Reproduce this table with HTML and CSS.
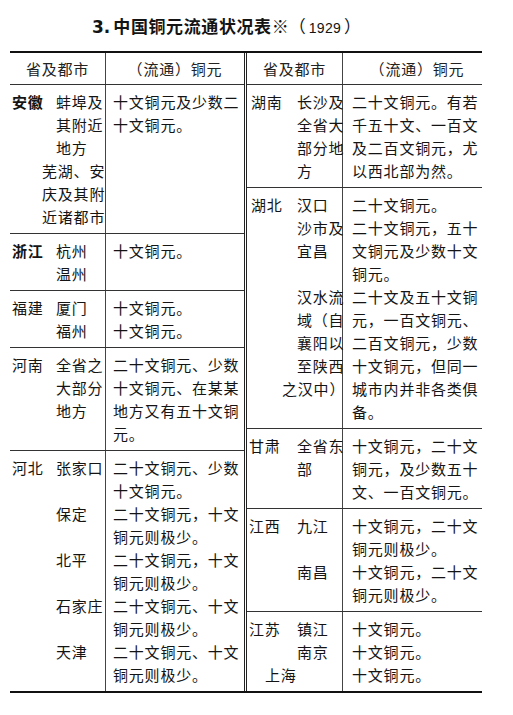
FILE: index.html
```html
<!DOCTYPE html>
<html lang="zh">
<head>
<meta charset="utf-8">
<title>中国铜元流通状况表</title>
<link rel="stylesheet" href="styles.css">
</head>
<body>
<div class="page">
  <h1 class="title"><span class="num">3.</span>中国铜元流通状况表<span class="light">※（<span class="yr">1929</span>）</span></h1>
  <div class="table">
    <div class="half left">
      <div class="head">
        <div class="c1">省及都市</div>
        <div class="c2">（流通）铜元</div>
      </div>
      <div class="row">
        <div class="c1"><div class="prov strong">安徽</div><div class="cities">
          <div class="ln">蚌埠及</div><div class="ln">其附近</div><div class="ln">地方</div>
          <div class="ln hang">芜湖、安</div><div class="ln hang">庆及其附</div><div class="ln hang">近诸都市</div>
        </div></div>
        <div class="c2">十文铜元及少数二<br>十文铜元。</div>
      </div>
      <div class="row">
        <div class="c1"><div class="prov strong">浙江</div><div class="cities">
          <div class="ln">杭州</div><div class="ln">温州</div>
        </div></div>
        <div class="c2">十文铜元。</div>
      </div>
      <div class="row">
        <div class="c1"><div class="prov">福建</div><div class="cities">
          <div class="ln">厦门</div><div class="ln">福州</div>
        </div></div>
        <div class="c2">十文铜元。<br>十文铜元。</div>
      </div>
      <div class="row">
        <div class="c1"><div class="prov">河南</div><div class="cities">
          <div class="ln">全省之</div><div class="ln">大部分</div><div class="ln">地方</div>
        </div></div>
        <div class="c2">二十文铜元、少数<br>十文铜元、在某某<br>地方又有五十文铜<br>元。</div>
      </div>
      <div class="row">
        <div class="c1"><div class="prov">河北</div><div class="cities">
          <div class="ln">张家口</div><div class="ln"></div>
          <div class="ln">保定</div><div class="ln"></div>
          <div class="ln">北平</div><div class="ln"></div>
          <div class="ln">石家庄</div><div class="ln"></div>
          <div class="ln">天津</div><div class="ln"></div>
        </div></div>
        <div class="c2">二十文铜元、少数<br>十文铜元。<br>二十文铜元，十文<br>铜元则极少。<br>二十文铜元，十文<br>铜元则极少。<br>二十文铜元、十文<br>铜元则极少。<br>二十文铜元、十文<br>铜元则极少。</div>
      </div>
    </div>
    <div class="half right">
      <div class="head">
        <div class="c1">省及都市</div>
        <div class="c2">（流通）铜元</div>
      </div>
      <div class="row">
        <div class="c1"><div class="prov">湖南</div><div class="cities">
          <div class="ln">长沙及</div><div class="ln">全省大</div><div class="ln">部分地</div><div class="ln">方</div>
        </div></div>
        <div class="c2">二十文铜元。有若<br>千五十文、一百文<br>及二百文铜元，尤<br>以西北部为然。</div>
      </div>
      <div class="row">
        <div class="c1"><div class="prov">湖北</div><div class="cities">
          <div class="ln">汉口</div><div class="ln">沙市及</div><div class="ln">宜昌</div><div class="ln"></div>
          <div class="ln">汉水流</div><div class="ln">域（自</div><div class="ln">襄阳以</div><div class="ln">至陕西</div>
          <div class="ln hang-r">之汉中）</div><div class="ln"></div>
        </div></div>
        <div class="c2">二十文铜元。<br>二十文铜元，五十<br>文铜元及少数十文<br>铜元。<br>二十文及五十文铜<br>元，一百文铜元、<br>二百文铜元，少数<br>十文铜元，但同一<br>城市内并非各类俱<br>备。</div>
      </div>
      <div class="row">
        <div class="c1"><div class="prov near">甘肃</div><div class="cities">
          <div class="ln">全省东</div><div class="ln">部</div>
        </div></div>
        <div class="c2">十文铜元，二十文<br>铜元，及少数五十<br>文、一百文铜元。</div>
      </div>
      <div class="row">
        <div class="c1"><div class="prov near">江西</div><div class="cities">
          <div class="ln">九江</div><div class="ln"></div><div class="ln">南昌</div><div class="ln"></div>
        </div></div>
        <div class="c2">十文铜元，二十文<br>铜元则极少。<br>十文铜元，二十文<br>铜元则极少。</div>
      </div>
      <div class="row">
        <div class="c1"><div class="prov near">江苏</div><div class="cities">
          <div class="ln">镇江</div><div class="ln">南京</div><div class="ln hang-far">上海</div>
        </div></div>
        <div class="c2">十文铜元。<br>十文铜元。<br>十文铜元。</div>
      </div>
    </div>
  </div>
</div>
</body>
</html>
```

FILE: styles.css
```css
html, body {
  margin: 0;
  background: #ffffff;
}

body {
  color: #141414;
  font-family: "Noto Sans CJK SC", "Noto Sans", sans-serif;
}

.page {
  width: 472px;
  padding: 14px 0 0 10px;
}

.title {
  margin: 0 0 13px 82px;
  height: 24px;
  font-size: 17px;
  font-weight: 700;
  line-height: 24px;
  letter-spacing: 0.6px;
  white-space: nowrap;
}

.title .num {
  font-family: "DejaVu Sans", sans-serif;
  letter-spacing: 0;
  margin-right: 3px;
  line-height: 1;
}

.title .light {
  font-weight: 400;
  letter-spacing: 0;
}

.title .yr {
  font-family: "Liberation Sans", sans-serif;
  font-size: 14px;
  line-height: 1;
  letter-spacing: 0.3px;
  padding: 0 3px;
}

.table {
  display: flex;
  border-top: 2px solid #111;
  border-bottom: 2px solid #111;
  height: 642px;
  box-sizing: border-box;
}

.half {
  display: flex;
  flex-direction: column;
}

.left {
  width: 237px;
  box-sizing: border-box;
  border-right: 3px double #222;
}

.right {
  flex: 1;
}

.head {
  display: flex;
  height: 35px;
  box-sizing: border-box;
  border-bottom: 1px solid #333;
  font-size: 15px;
  letter-spacing: 0.8px;
  color: #222;
}

.head .c1,
.head .c2 {
  display: flex;
  align-items: center;
  justify-content: center;
  padding: 0;
}

.row {
  display: flex;
  border-bottom: 1px solid #333;
  font-size: 15px;
  line-height: 23px;
  letter-spacing: 0.8px;
  white-space: nowrap;
}

.row:last-child {
  flex: 1;
  border-bottom: 0;
}

.c1 {
  flex: none;
  width: 96px;
  box-sizing: border-box;
  border-right: 1px solid #444;
  display: flex;
  padding: 5px 0;
}

.c2 {
  flex: 1;
  padding: 5px 0 5px 7px;
}

.right .c2 {
  padding-left: 9px;
}

.prov {
  flex: none;
  width: 46px;
  box-sizing: border-box;
  padding-left: 2px;
}

.right .prov {
  width: 50px;
  padding-left: 4px;
}

.right .prov.near {
  padding-left: 2px;
}

.strong {
  font-weight: 700;
}

.cities {
  flex: 1;
}

.ln {
  height: 23px;
}

.hang {
  margin-left: -14px;
}

.hang-r {
  margin-left: -15px;
}

.hang-far {
  margin-left: -32px;
}
```
